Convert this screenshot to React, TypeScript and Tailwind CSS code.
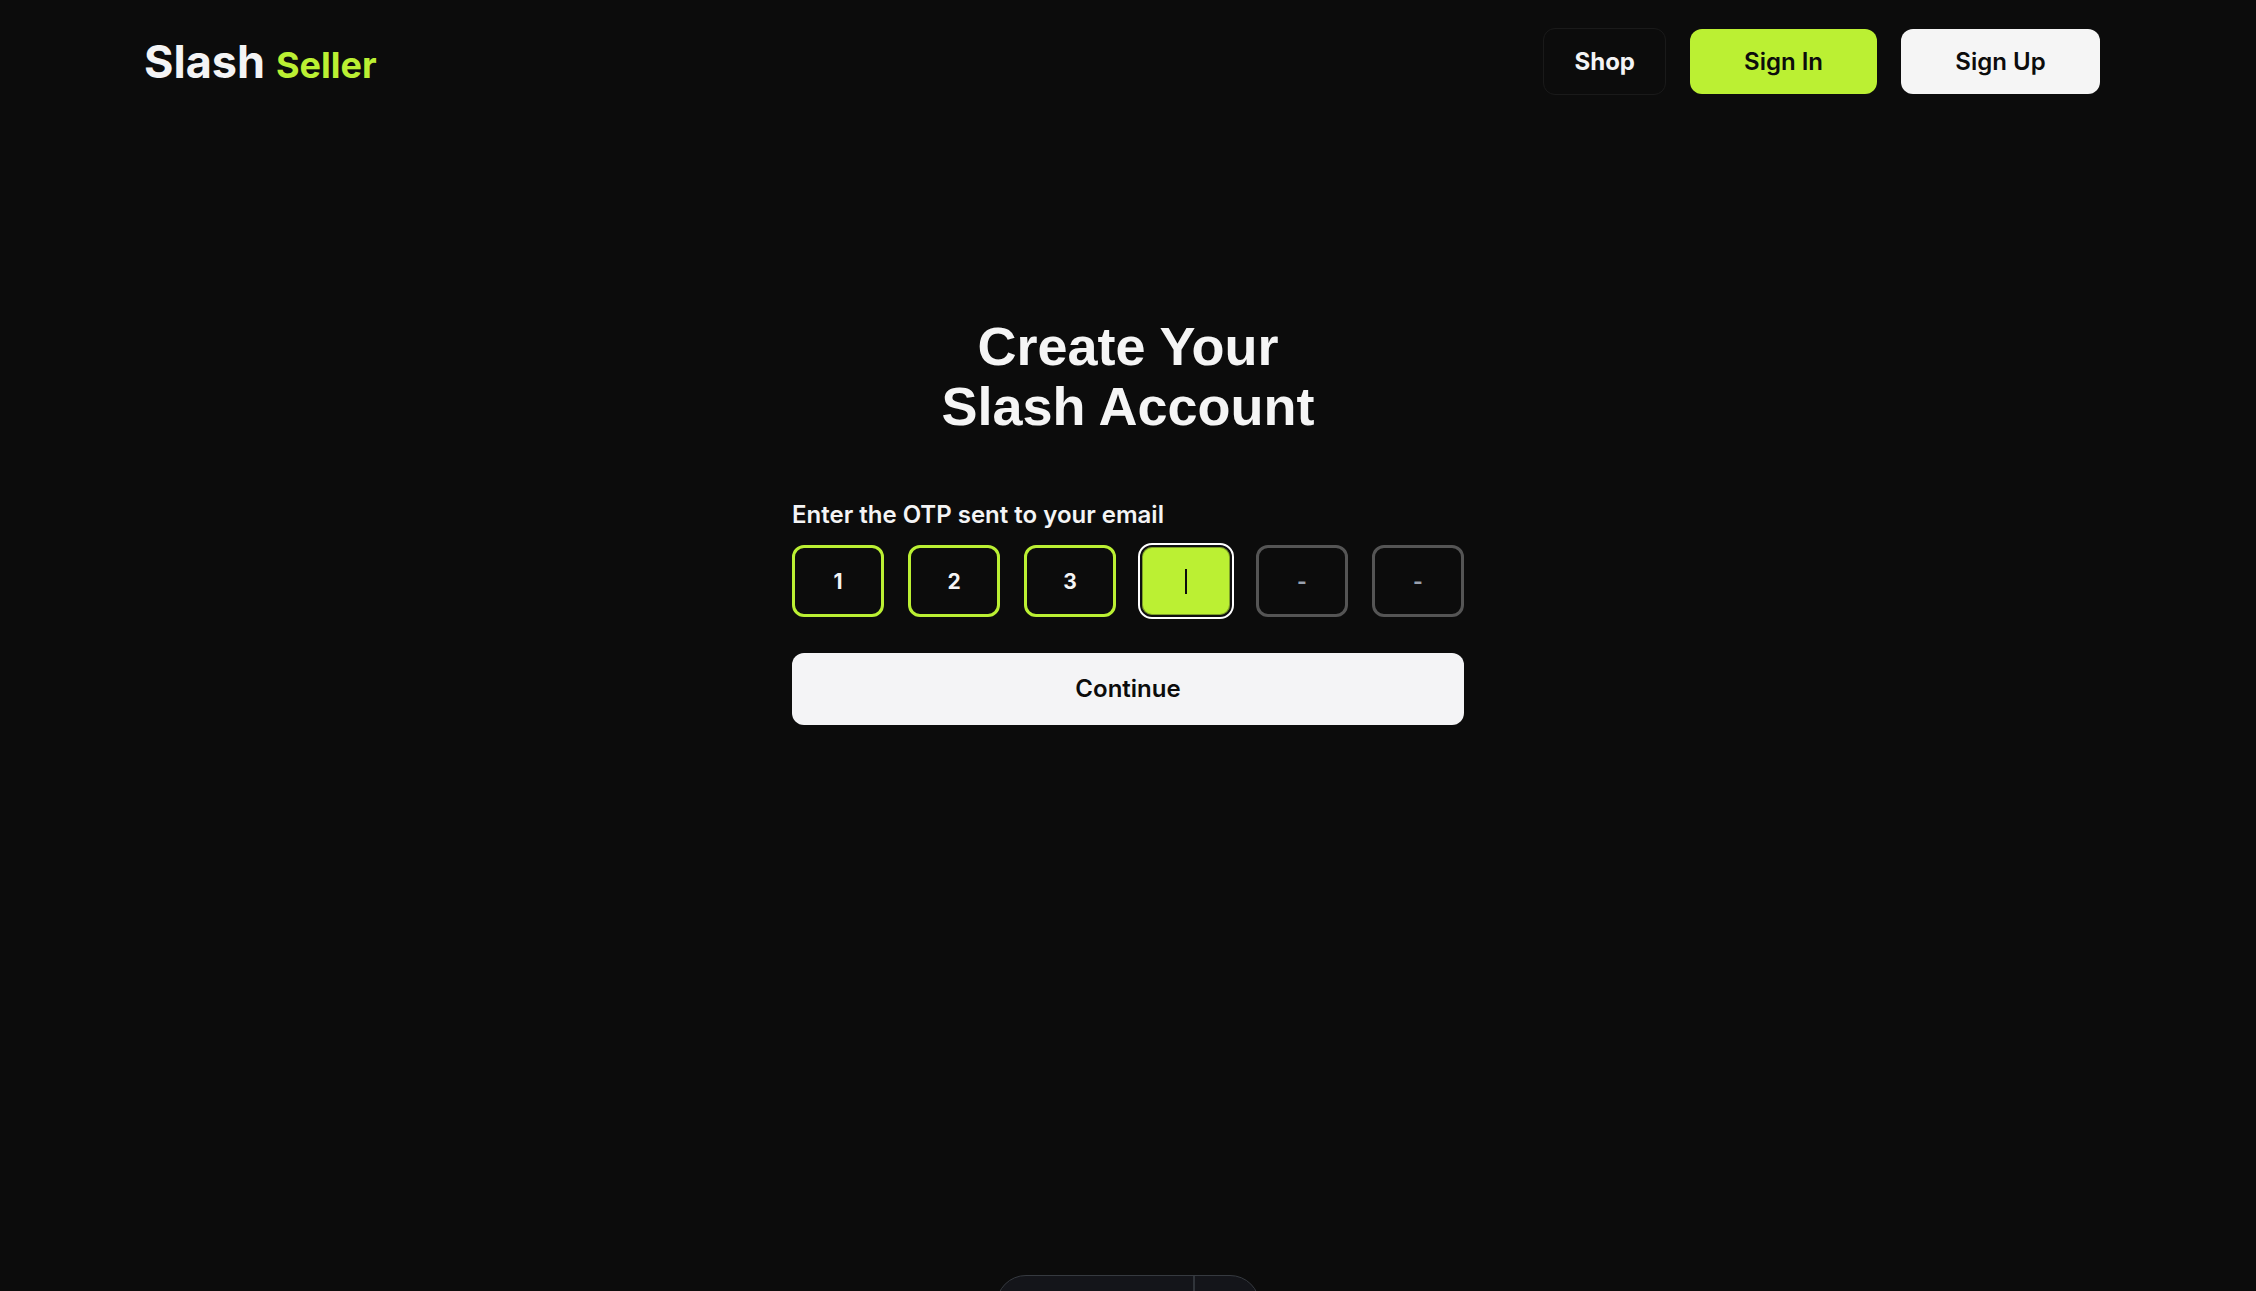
const digits = ["1", "2", "3", "", "", ""];
const activeIndex = 3;

const cellBase =
  "h-18 w-full min-w-0 rounded-xl text-center text-[21px] font-bold placeholder:text-gray-400";
const filledCell = "border-3 border-[#bbf033] bg-transparent text-[#f4f4f5]";
const emptyCell = "border-3 border-[#555555] bg-transparent text-[#f4f4f5]";
const activeCell =
  "border-2 border-[#101010] bg-[#bbf033] text-[#0c0c0c] inset-ring inset-ring-[#7d9f28] outline-2 outline-white";

function Header() {
  return (
    <header className="flex items-center justify-between pt-7 pr-39 pl-36">
      <a href="#" className="flex items-baseline gap-[11px] font-bold">
        <span className="text-[45px] leading-[67px] text-[#f4f4f5]">Slash</span>
        <span className="text-[36px] text-[#bbf033]">Seller</span>
      </a>
      <nav className="flex items-center gap-6 text-2xl font-semibold">
        <a
          href="#"
          className="rounded-xl border border-[#1a1a1a] px-[30px] py-4 leading-[33px] font-bold text-[#f4f4f5]"
        >
          Shop
        </a>
        <button type="button" className="min-w-[187px] rounded-xl bg-[#bbf033] py-4 leading-[33px] text-[#0c0c0c]">
          Sign In
        </button>
        <button type="button" className="min-w-[199px] rounded-xl bg-[#f5f5f5] py-4 leading-[33px] text-[#0c0c0c]">
          Sign Up
        </button>
      </nav>
    </header>
  );
}

function OtpForm() {
  return (
    <form className="mx-auto mt-[61px] w-full max-w-[672px]">
      <label htmlFor="otp-3" className="block text-2xl leading-9 font-semibold text-[#f4f4f5]">
        Enter the OTP sent to your email
      </label>
      <div className="mt-3 grid grid-cols-6 gap-6">
        {digits.map((digit, i) => (
          <div key={i} className="relative">
            <input
              id={`otp-${i}`}
              aria-label={`Digit ${i + 1}`}
              inputMode="numeric"
              maxLength={1}
              defaultValue={digit}
              placeholder={i === activeIndex ? "" : "-"}
              className={`${cellBase} ${i === activeIndex ? activeCell : digit ? filledCell : emptyCell}`}
            />
            {i === activeIndex && (
              <span className="pointer-events-none absolute inset-0 flex items-center justify-center">
                <span className="h-[25px] w-0.5 bg-[#0c0c0c]" />
              </span>
            )}
          </div>
        ))}
      </div>
      <button
        type="button"
        className="mt-9 h-18 w-full rounded-xl bg-[#f4f4f6] text-2xl font-semibold text-[#0c0c0c]"
      >
        Continue
      </button>
    </form>
  );
}

export default function App() {
  return (
    <div className="relative flex h-screen flex-col overflow-hidden bg-[#0c0c0c] font-['Inter',sans-serif]">
      <Header />
      <main className="px-6 pt-[221px]">
        <h1 className="text-center font-['Liberation_Sans',sans-serif] text-[54px] leading-[60px] font-bold text-[#f5f5f5]">
          Create Your
          <br />
          Slash Account
        </h1>
        <OtpForm />
      </main>
      <div className="absolute -bottom-11 left-1/2 flex h-15 w-[264px] -translate-x-1/2 rounded-full border border-[#363a40] bg-[#14151a]">
        <div className="grow border-r-2 border-[#30343a]" />
        <div className="w-16" />
      </div>
    </div>
  );
}
